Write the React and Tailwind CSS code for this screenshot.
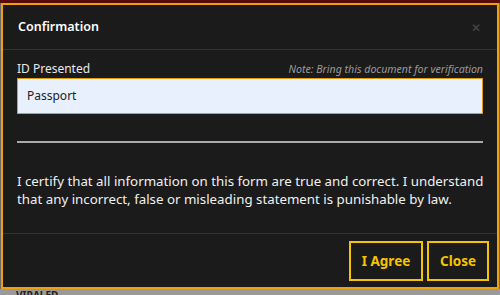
import React from "react";

export default function App() {
  return (
    <div
      className="w-[500px] h-[295px] overflow-hidden bg-[#6b6b6b] flex flex-col"
      style={{ fontFamily: "'Noto Sans', sans-serif" }}
    >
      <div className="h-[3px] bg-[#5a0c0c] shrink-0" />
      <div className="mx-[1px] h-[286px] shrink-0 border-2 border-[#f0a00a] bg-[#1b1b1b] flex flex-col">
        {/* header */}
        <div className="h-[45px] shrink-0 flex items-center justify-between px-[15px] pt-[1px] border-b border-[#3d3120]">
          <h2 className="text-[12.5px] font-semibold text-white">Confirmation</h2>
          <button className="text-[#4a4a4a] text-[12px] leading-none mr-[1px]">✕</button>
        </div>
        {/* body */}
        <div className="px-[14px] pt-[11px] pb-[25px] border-b border-[#3d3120]">
          <div className="flex items-end justify-between mb-[1px] leading-[16px]">
            <label className="text-[12px] text-[#e8e8e8]">ID Presented</label>
            <span className="text-[10.6px] italic text-[#9a9a9a]">
              Note: Bring this document for verification
            </span>
          </div>
          <div className="h-[36px] bg-[#e8f0fe] border border-[#e09b16] flex items-center px-[9px] text-[12px] text-[#222]">
            Passport
          </div>
          <div className="mt-[27px] h-[2px] bg-[#aaaaaa]" />
          <p className="mt-[29px] -mr-[8px] text-[13.3px] leading-[18px] text-[#f0f0f0]">
            I certify that all information on this form are true and correct. I understand that
            any incorrect, false or misleading statement is punishable by law.
          </p>
        </div>
        {/* footer */}
        <div className="flex-1 flex items-center justify-end gap-[4px] pr-[8px] pt-[1px]">
          <button className="h-[40px] w-[74px] border-2 border-[#f5c400] text-[#f5c400] font-bold text-[13.5px]">
            I Agree
          </button>
          <button className="h-[40px] w-[62px] border-2 border-[#f5c400] text-[#f5c400] font-bold text-[13.5px]">
            Close
          </button>
        </div>
      </div>
      <div className="flex-1 bg-[#9a9a9a] pl-[16px] text-[10px] font-bold text-[#222] leading-[12px]">
        VIRALED
      </div>
    </div>
  );
}
